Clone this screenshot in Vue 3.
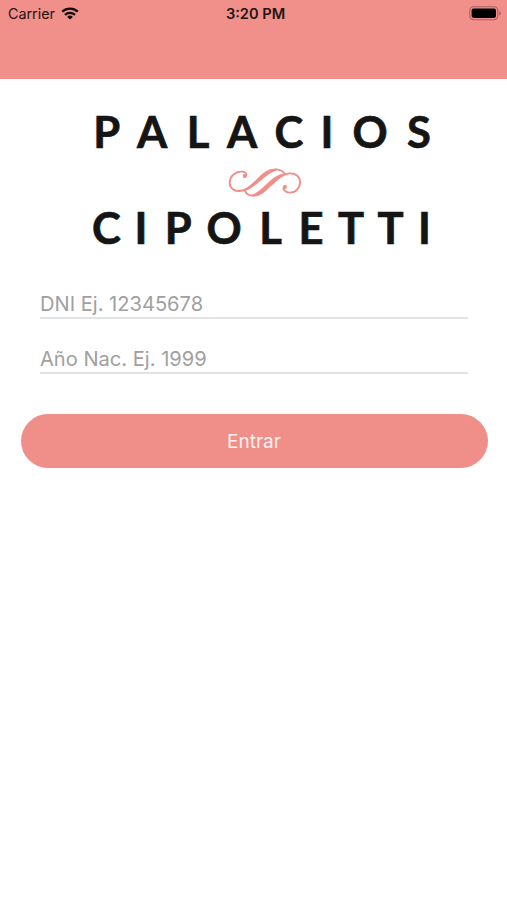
<script setup>
import { ref } from 'vue'

const dni = ref('')
const year = ref('')

const topLetters = [
  ['P', 106.6], ['A', 152], ['L', 198], ['A', 242], ['C', 289], ['I', 327], ['O', 370], ['S', 419],
]
const bottomLetters = [
  ['C', 106.5], ['I', 141], ['P', 178.2], ['O', 224], ['L', 270.5], ['E', 311], ['T', 351], ['T', 390.5], ['I', 424.5],
]
const word = (letters) => letters.map((l) => l[0]).join('')
const stops = (letters) => letters.map((l) => l[1]).join(' ')
</script>

<template>
  <main class="screen">
    <header class="header">
      <div class="status">
        <div class="carrier">
          <span>Carrier</span>
          <svg class="wifi" viewBox="0 0 18 13" width="18" height="13">
            <path d="M1.2 4.7a11.2 11.2 0 0 1 15.6 0M4 7.9a7.2 7.2 0 0 1 10 0" fill="none" stroke="#160c0c" stroke-width="2.3" />
            <path d="M9 12.6 6.1 9.9a4.2 4.2 0 0 1 5.8 0z" fill="#160c0c" />
          </svg>
        </div>
        <span class="time">3:20 PM</span>
        <svg class="battery" viewBox="0 0 33 15" width="33" height="15">
          <rect x="0.8" y="0.8" width="28" height="12.9" rx="3.6" fill="none" stroke="#a8625f" stroke-width="1.1" />
          <rect x="2.6" y="2.6" width="24.4" height="9.3" rx="1.8" fill="#000" />
          <path d="M30.2 5a2.5 2.5 0 0 1 0 4.6z" fill="#a8625f" />
        </svg>
      </div>
    </header>

    <svg class="logo" viewBox="0 79 507 201" width="507" height="201">
      <text class="name" :x="stops(topLetters)" y="148">{{ word(topLetters) }}</text>
      <g transform="translate(220 160) scale(.33333)" fill="none" stroke="#f08e8a" stroke-linecap="round" stroke-linejoin="round">
        <path d="M76 50C84 40 73 34 62 35C43 36 29 51 29 69C29 84 42 94 59 93C92 90 112 56 132 42" stroke-width="5.5" />
        <path d="M76 94C82 108 106 113 128 97C154 76 174 44 208 40C227 39 240 50 240 66C240 85 227 98 210 98C195 98 187 87 192 80" stroke-width="5.5" />
        <path d="M84 84C104 72 118 51 138 37C158 24 182 24 196 43" stroke-width="5.5" />
        <path d="M74 91C102 78 120 49 142 37C150 32 160 29 168 29C148 35 136 47 118 62C102 76 88 88 74 91Z" fill="#f08e8a" stroke-width="5" />
        <path d="M98 106C126 98 146 63 170 51C178 46 186 43 194 43C176 52 164 65 146 81C130 96 116 108 98 106Z" fill="#f08e8a" stroke-width="5" />
        <circle cx="74" cy="48" r="6" fill="#f08e8a" stroke="none" />
        <circle cx="195" cy="81" r="6" fill="#f08e8a" stroke="none" />
      </g>
      <text class="name" :x="stops(bottomLetters)" y="243.5">{{ word(bottomLetters) }}</text>
    </svg>

    <form class="form" @submit.prevent>
      <input v-model="dni" class="field" placeholder="DNI Ej. 12345678" />
      <input v-model="year" class="field" placeholder="Año Nac. Ej. 1999" />
      <button class="submit" type="submit">Entrar</button>
    </form>
  </main>
</template>

<style>
body { margin: 0; background: #fff; }
</style>

<style scoped>
.screen {
  width: 507px;
  height: 900px;
  background: #fff;
  font-family: Inter, "Liberation Sans", sans-serif;
  overflow: hidden;
}
.header {
  height: 79px;
  background: #f18f8b;
}
.status {
  display: grid;
  grid-template-columns: 1fr auto 1fr;
  align-items: center;
  height: 27px;
  padding: 0 5px 0 8px;
  color: #241413;
  font-size: 14.3px;
}
.carrier { display: flex; align-items: center; gap: 6.5px; }
.time { padding-left: 1px; font-weight: 600; font-size: 14.6px; }
.battery { justify-self: end; }
.logo { display: block; }
.name {
  font-family: Lato, sans-serif;
  font-size: 43.5px;
  font-weight: 700;
  text-anchor: middle;
  fill: #151515;
  stroke: #151515;
  stroke-width: 0.7;
}
.form { display: flex; flex-direction: column; }
.field {
  box-sizing: border-box;
  width: 428px;
  height: 30px;
  margin: 9px 0 0 40px;
  padding: 2px 0 0;
  border: 0;
  border-bottom: 2px solid #e2e2e2;
  border-radius: 0;
  outline: 0;
  background: transparent;
  font: 400 20.1px Inter, sans-serif;
  color: #333;
}
.field + .field { margin-top: 25px; }
.field::placeholder { color: #a0a0a0; opacity: 1; }
.submit {
  width: 467px;
  height: 54px;
  margin: 40px 0 0 20.5px;
  padding: 0;
  border: 0;
  border-radius: 27px;
  background: #f08e8a;
  color: #fff1ec;
  font: 400 19px Inter, sans-serif;
}
</style>
